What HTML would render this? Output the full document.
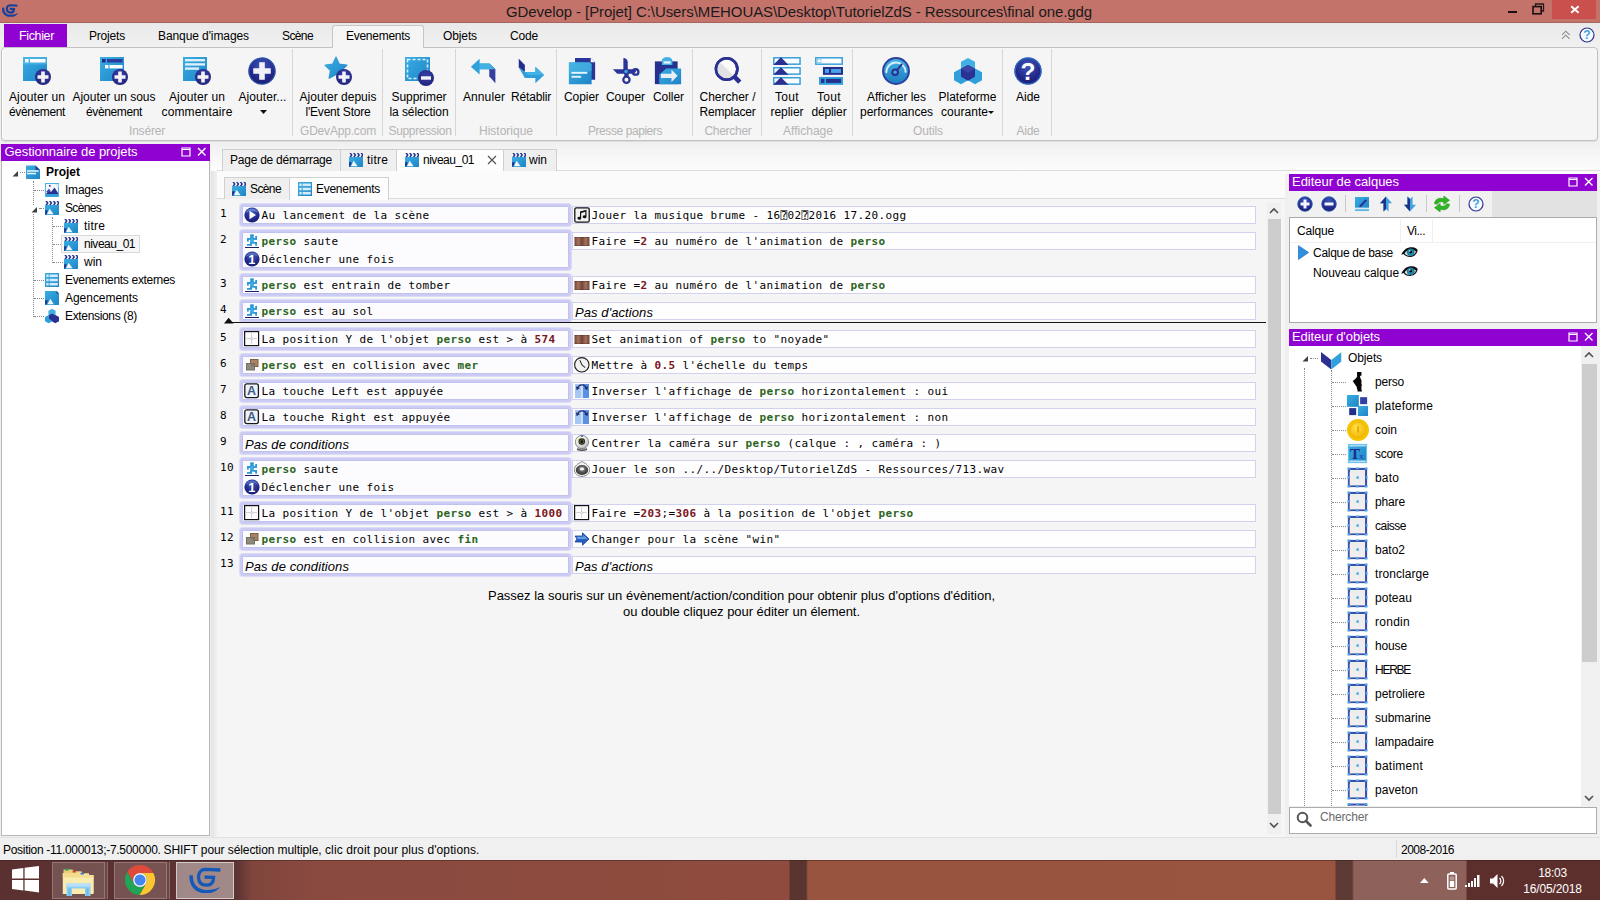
<!DOCTYPE html>
<html lang="fr">
<head>
<meta charset="utf-8">
<title>GDevelop - [Projet] final one.gdg</title>
<style>
html,body{margin:0;padding:0;}
body{width:1600px;height:900px;overflow:hidden;background:#f0f0f0;font-family:'Liberation Sans',sans-serif;font-size:12px;color:#000;}
#app{position:relative;width:1600px;height:900px;overflow:hidden;}
#app div,#app svg.i{position:absolute;box-sizing:border-box;}
.t{white-space:pre;}
.m{font-family:'DejaVu Sans Mono','Liberation Mono',monospace;font-size:11px;letter-spacing:0.378px;white-space:pre;height:16px;line-height:16px;}
.m b{color:#2C6420;font-weight:bold;}
.m i{color:#7A1420;font-weight:bold;font-style:normal;}
.cb{border:2px solid #CBCBF4;border-radius:3px;background:#FCFCFF;box-shadow:0 0 0 1px #DCDCF8,inset 0 0 0 1px #C2C2EE;}
.ab{border:1px solid #D2D2EE;background:#FEFEFF;}
.dv{border-left:1px dotted #8a8a8a;width:0;}
.dh{border-top:1px dotted #8a8a8a;height:0;}
</style>
</head>
<body>

<svg width="0" height="0" style="position:absolute">
<defs>
<linearGradient id="gb" x1="0" y1="0" x2="1" y2="1"><stop offset="0" stop-color="#3AAEE3"/><stop offset="1" stop-color="#1E84C6"/></linearGradient>
<linearGradient id="gb2" x1="0" y1="0" x2="0" y2="1"><stop offset="0" stop-color="#45B4E6"/><stop offset="1" stop-color="#1C7CC0"/></linearGradient>
<radialGradient id="gn" cx="0.5" cy="0.35" r="0.7"><stop offset="0" stop-color="#3A3FA8"/><stop offset="1" stop-color="#1F2278"/></radialGradient>
<radialGradient id="gnb" cx="0.5" cy="0.3" r="0.8"><stop offset="0" stop-color="#3D58B8"/><stop offset="0.6" stop-color="#23288A"/><stop offset="1" stop-color="#171A60"/></radialGradient>
<linearGradient id="gbrown" x1="0" y1="0" x2="1" y2="0"><stop offset="0" stop-color="#6E4638"/><stop offset="0.25" stop-color="#A8705C"/><stop offset="0.5" stop-color="#6E4638"/><stop offset="0.75" stop-color="#A8705C"/><stop offset="1" stop-color="#6E4638"/></linearGradient>
<radialGradient id="gcoin" cx="0.4" cy="0.35" r="0.7"><stop offset="0" stop-color="#FFE14A"/><stop offset="1" stop-color="#F0B400"/></radialGradient>

<radialGradient id="gball" cx="0.35" cy="0.3" r="0.8"><stop offset="0" stop-color="#FFFFFF"/><stop offset="0.6" stop-color="#DCDCDC"/><stop offset="1" stop-color="#A8A8A8"/></radialGradient><radialGradient id="gspk" cx="0.5" cy="0.4" r="0.6"><stop offset="0" stop-color="#B4B4B4"/><stop offset="0.5" stop-color="#5A5A5A"/><stop offset="1" stop-color="#2E2E2E"/></radialGradient>
<g id="plusbadge"><circle cx="22" cy="22" r="8" fill="url(#gn)"/><path d="M20.200 16.500h3.600v3.700h3.700v3.600h-3.700v3.700h-3.600v-3.700h-3.700v-3.600h3.700z" fill="#F4F4F8"/></g>
</defs>

<symbol id="r_event" viewBox="0 0 32 32"><rect x="2" y="2" width="24" height="24" fill="url(#gb)"/><rect x="2" y="2" width="24" height="7.5" fill="#55BDEA" opacity=".55"/><rect x="4" y="4" width="3.6" height="3.5" fill="#fff"/><rect x="9" y="4" width="15.5" height="3.5" fill="#fff"/><use href="#plusbadge"/></symbol>
<symbol id="r_subevent" viewBox="0 0 32 32"><rect x="2" y="2" width="24" height="24" fill="url(#gb)"/><rect x="4" y="4" width="3.6" height="3.5" fill="#24288A"/><rect x="9" y="4" width="15.5" height="3.5" fill="#2B3BA0"/><rect x="7" y="10" width="3.4" height="3.4" fill="#fff"/><rect x="11.5" y="10" width="13" height="3.4" fill="#fff"/><use href="#plusbadge"/></symbol>
<symbol id="r_comment" viewBox="0 0 32 32"><rect x="2" y="2" width="24" height="24" fill="url(#gb)"/><rect x="4" y="4" width="20" height="2.4" fill="#DDF0FA"/><rect x="4" y="8.2" width="20" height="2.4" fill="#DDF0FA"/><rect x="4" y="12.4" width="14" height="2.4" fill="#DDF0FA"/><use href="#plusbadge"/></symbol>
<symbol id="r_plus" viewBox="0 0 32 32"><circle cx="16" cy="16" r="15.500" fill="url(#gnb)"/><circle cx="16" cy="16" r="15" fill="none" stroke="#2C60B8" stroke-opacity=".7" stroke-width="1.400"/><path d="M12.800 6h6.400v6.800H26v6.400h-6.800V26h-6.400v-6.800H6v-6.400h6.800z" fill="#F2F2F6"/></symbol>
<symbol id="r_star" viewBox="0 0 32 32"><path d="M14 2.200l3.300 7 7.500 1-5.500 5.300 1.400 7.600-6.700-3.700-6.800 3.700 1.400-7.600L3.200 10.200l7.500-1z" fill="url(#gb)" stroke="url(#gb)" stroke-width="1.400" stroke-linejoin="round"/><use href="#plusbadge"/></symbol>
<symbol id="r_delsel" viewBox="0 0 32 32"><rect x="2" y="2" width="25" height="24" fill="url(#gb)"/><rect x="4.5" y="4.5" width="20" height="19" fill="none" stroke="#D8F0FA" stroke-width="1.6" stroke-dasharray="3 2"/><circle cx="23" cy="23" r="8" fill="url(#gn)"/><rect x="18" y="21.3" width="10" height="3.4" fill="#F4F4F8"/></symbol>
<symbol id="r_undo" viewBox="0 0 32 32"><path d="M1 11L11 2v5.5h11l7 6.5H11V20z" fill="#2FA2DC"/><path d="M22 7.5l7 6.5v16l-7-8z" fill="#3640A0"/><path d="M11 14h18l-7-6.5H11z" fill="#43B0E4"/></symbol>
<symbol id="r_redo" viewBox="0 0 32 32"><path d="M2 2l7 7v8L2 12z" fill="#242C8C"/><path d="M2 12l7 5h12v-6l10 9.5L21 30v-6H9z" fill="#2E9FDB"/><path d="M9 17h12v-6l10 9.5H13z" fill="#45B2E5"/></symbol>
<symbol id="r_copy" viewBox="0 0 32 32"><path d="M8 1h18l5 5v20H8z" fill="#2A3596"/><path d="M26 1l5 5h-5z" fill="#fff"/><path d="M1 6h24l2 2v23H1z" fill="url(#gb)"/><path d="M1 6h24l2 2v8L1 20z" fill="#4FB9E8" opacity=".5"/><rect x="4" y="17" width="18" height="2.2" fill="#E4F4FB"/><rect x="4" y="21.5" width="11" height="2.2" fill="#E4F4FB"/></symbol>
<symbol id="r_cut" viewBox="0 0 32 32"><path d="M13 1c3 0 5 2 5 5v11h-5z" fill="#2B3598"/><path d="M1 14h27c0 3-2 5-5 5H6z" fill="#2B3598"/><circle cx="16.5" cy="26" r="3.6" fill="none" stroke="#2B3598" stroke-width="2.6"/><circle cx="27" cy="17" r="3.2" fill="none" stroke="#2B3598" stroke-width="2.6"/><path d="M14 17h5v6h-5z" fill="#2B3598"/><circle cx="16" cy="16.5" r="2" fill="#3AA8E0"/></symbol>
<symbol id="r_paste" viewBox="0 0 32 32"><path d="M1 5h26v26H1z" fill="#27318F"/><path d="M9 4a6 4 0 0 1 12 0v5H9z" fill="#45B2E6"/><rect x="11" y="5" width="8" height="2.5" fill="#F0F8FC"/><path d="M14 13h17v18H6V20z" fill="url(#gb)"/><path d="M8 19h12v-4.5l7 7-7 7V24H8z" fill="#EAEFF4"/></symbol>
<symbol id="r_find" viewBox="0 0 32 32"><circle cx="14.500" cy="13.600" r="12.200" fill="#FAFAFA" stroke="#2B3192" stroke-width="3"/><path d="M5.600 21.500A12 12 0 0 1 6.500 5.500L22.500 21.500A12 12 0 0 1 5.600 21.500z" fill="#E2E2E4" transform="rotate(0)"/><circle cx="14.500" cy="13.600" r="12.200" fill="none" stroke="#2B3192" stroke-width="3"/><path d="M23.800 22.900l5.700 5.800" stroke="#2B3192" stroke-width="5.200"/></symbol>
<symbol id="r_fold" viewBox="0 0 32 32"><g id="foldrow"><rect x=".9" y=".9" width="30" height="7.300" fill="#FBFDFE" stroke="#37A0D8" stroke-width="1.700"/><path d="M.3 9L9 .3l8.800 8.700z" fill="#2B3192"/></g><use href="#foldrow" y="11.400"/><use href="#foldrow" y="22.800"/></symbol>
<symbol id="r_unfold" viewBox="0 0 32 32"><rect x=".9" y=".9" width="30.200" height="7.300" fill="#FBFDFE" stroke="#37A0D8" stroke-width="1.700"/><rect x="2.800" y="2.600" width="4" height="3.800" fill="#fff" stroke="#8CCFEF" stroke-width="1"/><rect x="9.100" y="11.400" width="22.900" height="9" fill="#25308C"/><rect x="11.400" y="13.700" width="4.600" height="4.500" fill="#4A9FE6"/><rect x="18.300" y="13.700" width="11.400" height="4.500" fill="#4A9FE6"/><rect x="4.600" y="22.800" width="27.400" height="9" fill="#319FDC"/><rect x="6.900" y="25" width="3.800" height="4.600" fill="#25308C"/><rect x="12.600" y="25" width="17.100" height="4.600" fill="#25308C"/></symbol>
<symbol id="r_perf" viewBox="0 0 32 32"><circle cx="16" cy="16" r="14.800" fill="url(#gb2)" stroke="#2A3EA0" stroke-width="2.200"/><path d="M5 17.500a11 11 0 0 1 22-0.500" fill="none" stroke="#D8EEF9" stroke-width="2.200" stroke-linecap="round"/><circle cx="15" cy="17.500" r="4.400" fill="#2B3192"/><path d="M15 17.500l7.500-9" stroke="#2B3192" stroke-width="2.200" stroke-linecap="round"/><circle cx="15" cy="17.500" r="2" fill="#3FA9E1"/></symbol>
<symbol id="r_platform" viewBox="0 0 32 32"><path d="M16 1l8 4.5v9L16 19l-8-4.500v-9z" fill="#43B0E4"/><path d="M8 14l8 4.5v9L8 32l-8-4.500v-9z" transform="translate(0 -1)" fill="#2E9FDB"/><path d="M24 14l8 4.5v9L24 32l-8-4.500v-9z" transform="translate(0 -1)" fill="#2E9FDB"/><path d="M16 9l8 4.5v9L16 27l-8-4.500v-9z" fill="#2B3192"/><path d="M16 9l8 4.500-8 4.500-8-4.500z" fill="#3A44A6"/></symbol>
<symbol id="r_help" viewBox="0 0 32 32"><circle cx="16" cy="16" r="15.500" fill="url(#gnb)"/><circle cx="16" cy="16" r="14.800" fill="none" stroke="#2A6FC8" stroke-opacity=".85" stroke-width="1.600"/><text x="16" y="26" text-anchor="middle" font-family="Liberation Sans,sans-serif" font-weight="bold" font-size="28" fill="#fff">?</text></symbol>

<!-- 16px icons -->
<symbol id="s_scene" viewBox="0 0 16 16"><rect x="1" y="1" width="14" height="4.500" fill="#F2F8FC"/><g fill="#25308C"><path d="M1.300 1h1.800l1.500 2.100L3.100 5.200H1.300l1.500-2.100z"/><path d="M5 1h1.800l1.500 2.100L6.800 5.200H5l1.500-2.100z"/><path d="M8.700 1h1.800L12 3.100l-1.500 2.100H8.700l1.500-2.100z"/><path d="M12.400 1h1.800l.8 1.100v2L14.200 5.200h-1.800l1.500-2.100z"/></g><rect x="1" y="5" width="14" height="10" fill="url(#gb)"/><path d="M3 14.300L5.600 8.800 9.600 14.300z" fill="#F2F7FA"/><path d="M1.200 14.600V10.300h2.400L2.300 14.600z" fill="#1F2C8A"/></symbol>
<symbol id="s_project" viewBox="0 0 16 16"><path d="M1 1.500h9.500L15 6v9H1z" fill="url(#gb)"/><path d="M10.500 1.500L15 6h-4.500z" fill="#2B3F9E"/><rect x="2" y="6.200" width="11.500" height="1.500" fill="#EAF7FD"/><rect x="2" y="8.800" width="9" height="1.500" fill="#EAF7FD"/></symbol>
<symbol id="s_images" viewBox="0 0 16 16"><rect x="1.500" y="1.500" width="13" height="13" fill="#F2F8FC" stroke="#4DB0E6"/><path d="M11 2h3.500v3.500z" fill="#CDE9F7"/><rect x="5" y="3" width="1.600" height="1.600" fill="#2B3192"/><path d="M2 12l3-4 2 2 3.500-4.500L14 11v2H2z" fill="#2B3192"/><path d="M2 10l3-3.200L6.500 8.500 5 10.500z" fill="#3C49A8"/><rect x="2" y="12" width="12" height="2.500" fill="#2E9FDB"/></symbol>
<symbol id="s_events" viewBox="0 0 16 16"><rect x="1" y="1" width="14" height="14" fill="url(#gb)"/><g fill="#D4ECF8"><rect x="2.300" y="2.500" width="2.400" height="2.600"/><rect x="5.600" y="2.500" width="8.200" height="2.600"/><rect x="2.300" y="6.700" width="2.400" height="2.600"/><rect x="5.600" y="6.700" width="8.200" height="2.600"/><rect x="2.300" y="10.900" width="2.400" height="2.600"/><rect x="5.600" y="10.900" width="8.200" height="2.600"/></g></symbol>
<symbol id="s_layout" viewBox="0 0 16 16"><path d="M1 1h11.500L15 3.500V15H1z" fill="url(#gb)"/><path d="M12.500 1L15 3.500h-2.500z" fill="#2B3192"/><path d="M3.600 14.300L6.300 8.800 9.800 14.300z" fill="#F2F7FA"/><path d="M1.200 14.600V10.300h2.600L2.400 14.600z" fill="#1F2C8A"/></symbol>
<symbol id="s_ext" viewBox="0 0 16 16"><path d="M8 .8l3.600 2v4.200L8 9 4.400 7V2.800z" fill="#43B0E4"/><path d="M4.600 7l3.600 2v4.200l-3.600 2-3.600-2V9z" fill="#2E9FDB"/><path d="M11.400 7l3.600 2v4.200l-3.600 2-3.600-2V9z" fill="#2B3192"/><path d="M8 5.500l3 1.700v3.500l-3 1.700-3-1.700V7.200z" fill="#2B3192"/></symbol>

<symbol id="c_play" viewBox="0 0 16 16"><circle cx="8" cy="8" r="7.600" fill="url(#gnb)"/><path d="M1.500 6a7 7 0 0 1 13 0a12 12 0 0 0-13 0z" fill="#6F96D8" opacity=".7"/><path d="M5.500 3.800l6.500 4.200-6.500 4.200z" fill="#fff"/></symbol>
<symbol id="c_one" viewBox="0 0 16 16"><circle cx="8" cy="8" r="7.600" fill="url(#gnb)"/><path d="M1.500 6a7 7 0 0 1 13 0a12 12 0 0 0-13 0z" fill="#6F96D8" opacity=".5"/><clipPath id="cp1"><rect x="0" y="0" width="11.400" height="16"/></clipPath><text x="4.300" y="12.600" clip-path="url(#cp1)" font-family="Liberation Sans,sans-serif" font-weight="bold" font-size="13" fill="#fff">1 H</text></symbol>
<symbol id="c_jump" viewBox="0 0 16 16"><g fill="#2C98D6"><rect x="6.100" y="1.200" width="3.700" height="2.900" rx=".8"/><rect x="11.200" y="3" width="1.800" height="3.500"/><rect x="3" y="5" width="10" height="1.900"/><rect x="3" y="5" width="1.800" height="3.600"/><rect x="6.200" y="3.800" width="3.600" height="6.800"/><rect x="9.500" y="9" width="3.500" height="1.800"/><rect x="11.200" y="9" width="1.800" height="3.700"/><rect x="3" y="11" width="4.800" height="1.700"/><rect x="6.200" y="10" width="1.800" height="2.700"/></g><rect x="6.800" y="5.200" width="2.400" height="4" fill="#45B4EE" opacity=".8"/><rect x="1" y="14" width="14" height="1" fill="#1E1E62"/></symbol>
<symbol id="c_pos" viewBox="0 0 16 16"><rect x=".6" y=".6" width="14" height="14" fill="#FDFDFD" stroke="#141414" stroke-width="1.200"/><path d="M7.600 2.500v10.500M2.500 7.600h10.500" stroke="#A8A8A8" stroke-width="1" stroke-dasharray="1 1"/><path d="M7.600 6.300l1.300 1.300-1.300 1.300-1.300-1.300z" fill="#fff" stroke="#999" stroke-width=".6"/></symbol>
<symbol id="c_coll" viewBox="0 0 16 16"><rect x="6.500" y="2.500" width="7.500" height="7" fill="#A88462" stroke="#7E5E42"/><rect x="2.500" y="6.500" width="8" height="6.500" fill="#8E8C7C" stroke="#727064"/><rect x="7" y="7" width="3" height="2.500" fill="#8A765E"/></symbol>
<symbol id="c_key" viewBox="0 0 16 16"><rect x=".8" y=".8" width="13.600" height="13.800" rx="2" fill="#EEF3F8" stroke="#1A1A1A" stroke-width="1.300"/><text x="7.600" y="12.400" text-anchor="middle" font-family="Liberation Sans,sans-serif" font-weight="bold" font-size="12.500" fill="#3C5A86">A</text></symbol>

<symbol id="a_music" viewBox="0 0 16 16"><rect x=".8" y=".8" width="14.400" height="14.400" rx="1.500" fill="#F2F2F2" stroke="#111" stroke-width="1.300"/><path d="M6 4.500l6.500-1.700v1.800L7.200 6v5.200a1.900 1.500 0 1 1-1.200-1.400zM12.500 4.600v5.200a1.900 1.500 0 1 1-1.200-1.400V4.900z" fill="#111"/></symbol>
<symbol id="a_anim" viewBox="0 0 16 16"><rect x=".5" y="4" width="15" height="9" fill="url(#gbrown)"/><rect x=".5" y="4" width="15" height="1" fill="#4A2E26" opacity=".35"/><rect x=".5" y="12" width="15" height="1" fill="#4A2E26" opacity=".35"/></symbol>
<symbol id="a_clock" viewBox="0 0 16 16"><circle cx="7.800" cy="7.800" r="7.200" fill="#F2F2F2" stroke="#1A1A1A" stroke-width="1.100"/><path d="M5.800 3.200L8 8l3.200 2.600" fill="none" stroke="#333" stroke-width="1.100"/></symbol>
<symbol id="a_flip" viewBox="0 0 16 16"><rect x="1" y="1" width="7" height="14" fill="#A6C6F3"/><rect x="8" y="1" width="7" height="14" fill="#5B90E3"/><rect x="7.500" y="1" width="1.200" height="14" fill="#F4F8FF"/><path d="M3.500 5.500C4.500 2.500 7 1.800 8 1.800s3.500.7 4.500 3.700" fill="none" stroke="#1B2A6A" stroke-width="1.300"/><path d="M2 3.200l.6 4 3.200-2.200z" fill="#1B2A6A"/><path d="M14 3.200l-.6 4-3.200-2.200z" fill="#1B2A6A"/></symbol>
<symbol id="a_cam" viewBox="0 0 16 16"><ellipse cx="8" cy="14.200" rx="5.200" ry="1.700" fill="#4A4A4A"/><ellipse cx="8" cy="13.600" rx="4.600" ry="1.100" fill="#B0B0B0"/><circle cx="8" cy="7" r="6.700" fill="url(#gball)" stroke="#6E6E6E" stroke-width=".7"/><path d="M3 5.500A5.500 5.500 0 0 1 7 2L7 5z" fill="#D8E060" opacity=".7"/><circle cx="8" cy=".9" r="1.100" fill="#4468CC"/><circle cx="7.800" cy="6.600" r="3.300" fill="#2B2B2B"/><circle cx="7.800" cy="6.600" r="2.100" fill="#77773C"/><circle cx="7.800" cy="6.600" r="1.300" fill="#0C0C0C"/></symbol>
<symbol id="a_sound" viewBox="0 0 16 16"><path d="M8 .6C12 2.500 15.700 5 15.700 8.700c0 3.900-3.400 6.700-7.700 6.700S.3 12.600.3 8.700C.3 5 4 2.500 8 .6z" fill="#F2F2F2" stroke="#5A5A5A" stroke-width=".7"/><ellipse cx="8" cy="9" rx="6.200" ry="5" fill="url(#gspk)"/><ellipse cx="8" cy="8" rx="2.100" ry="1.400" fill="#F6F6F6" opacity=".95"/></symbol>
<symbol id="a_arrow" viewBox="0 0 16 16"><path d="M1 5h7.500V1.800l6.500 6.200-6.500 6.200V11H1l2-3z" fill="#2560C4" stroke="#143C94" stroke-width=".8"/><path d="M2.500 5.800h6.800V3.800L13.500 8H3.500z" fill="#7BB4EE" opacity=".75"/></symbol>

<!-- layer toolbar -->
<symbol id="l_plus" viewBox="0 0 16 16"><circle cx="8" cy="8" r="7.500" fill="url(#gnb)"/><circle cx="8" cy="8" r="7.200" fill="none" stroke="#2C70C8" stroke-opacity=".7" stroke-width="1"/><path d="M6.500 3.500h3v3h3v3h-3v3h-3v-3h-3v-3h3z" fill="#F4F4F8"/></symbol>
<symbol id="l_minus" viewBox="0 0 16 16"><circle cx="8" cy="8" r="7.500" fill="url(#gnb)"/><circle cx="8" cy="8" r="7.200" fill="none" stroke="#2C70C8" stroke-opacity=".7" stroke-width="1"/><rect x="3.500" y="6.500" width="9" height="3" fill="#F4F4F8"/></symbol>
<symbol id="l_edit" viewBox="0 0 16 16"><rect x="1" y="1" width="14" height="10.800" fill="url(#gb)"/><path d="M5.500 9.500l6-6.300 1.500 1.500-6 6.300H5.500z" fill="#2B3192"/><rect x="1" y="11.800" width="14" height="1.400" fill="#D4ECF8"/><rect x="1" y="13.400" width="14" height="1.400" fill="#37A6DF"/></symbol>
<symbol id="l_up" viewBox="0 0 16 16"><path d="M8 .5l6 6.800h-3.500v8.200L8 13l-2.500 2.500V7.300H2z" fill="#3FA2E0"/><path d="M8 .5L2 7.300h3.500v8.200L8 13z" fill="#1F3488"/></symbol>
<symbol id="l_down" viewBox="0 0 16 16"><path d="M8 15.500l6-6.800h-3.500V.5L8 3 5.500 .5v8.200H2z" fill="#3FA2E0"/><path d="M8 15.500L2 8.700h3.500V.5L8 3z" fill="#1F3488"/></symbol>
<symbol id="l_refresh" viewBox="0 0 16 16"><path d="M.5 7.800C.8 4 4 1.800 7.500 2.300l2.300.5V0l5.700 4.300-5.700 4.300V6.200L7.500 5.800C5.500 5.600 4 6.500 3.500 8.300z" fill="#2DB522" stroke="#1F8A18" stroke-width=".5"/><path d="M15.500 8.200c-.3 3.800-3.500 6-7 5.500l-2.300-.5V16L.5 11.700l5.700-4.300v2.400l2.300.4c2 .2 3.500-.7 4-2.500z" fill="#2DB522" stroke="#1F8A18" stroke-width=".5"/></symbol>
<symbol id="l_help" viewBox="0 0 16 16"><circle cx="8" cy="8" r="7" fill="#F6FAFE" stroke="#2B3192" stroke-width="1.200"/><text x="8" y="12.300" text-anchor="middle" font-family="Liberation Sans,sans-serif" font-weight="bold" font-size="12" fill="#3FA2DE">?</text></symbol>
<symbol id="l_eye" viewBox="0 0 18 12"><path d="M.3 9C2.500 3 7.500 .6 12 1c2.800.3 4.800 1.600 5.700 3-.6 3.800-3.200 7-7.700 7.200C6.500 11.300 3.800 10 2.800 8z" fill="#0E0E0E"/><path d="M3.800 7.200c1.800-2.600 4.600-3.800 7.800-3.500 2 .2 3.400 1 4.300 1.800-1 2.600-2.900 4.400-5.900 4.600-2.600.2-5-.9-6.200-2.900z" fill="#D8E4E8"/><circle cx="10.300" cy="6.200" r="3.700" fill="#1F8FB2"/><circle cx="10.300" cy="6.200" r="3.700" fill="none" stroke="#0F5F7C" stroke-width=".8"/><circle cx="10.300" cy="6" r="1.500" fill="#050505"/><circle cx="9.300" cy="4.900" r=".8" fill="#fff"/></symbol>
<symbol id="l_cur" viewBox="0 0 12 16"><path d="M.5.500l11 7.500-11 7.500z" fill="#2E8FE0" stroke="#1E6FC8" stroke-width=".8"/></symbol>

<!-- object icons 24 -->
<symbol id="o_root" viewBox="0 0 20.500 17.600"><path d="M0 0l10.300 8v9.600L0 9.600z" fill="#2B3192"/><path d="M20.500 0L10.300 8v9.600l10.200-8z" fill="#2FA2DC"/></symbol>
<symbol id="o_perso" viewBox="0 0 24 24"><path d="M11.500 1h5v4.500h-1.500v2l1.500 3v5l1 .5-1 1v5h.5v1.500h-5V22l-1-4-2-3-2.500-3.500L9.500 9l2-2.500z" fill="#050505"/></symbol>
<symbol id="o_plat" viewBox="0 0 24 24"><rect x="0" y="0" width="13.500" height="13.500" fill="url(#gb)"/><rect x="15" y="2.500" width="8" height="8" fill="#3340A0"/><rect x="2.500" y="15" width="8" height="8" fill="#24308E"/><rect x="12.500" y="12.500" width="11.500" height="11.500" fill="url(#gb)"/></symbol>
<symbol id="o_coin" viewBox="0 0 24 24"><circle cx="12" cy="12" r="12" fill="#F5C200"/><circle cx="12" cy="12" r="8.500" fill="url(#gcoin)" stroke="#EDB600" stroke-width=".8"/><rect x="11" y="7.500" width="2.200" height="7.500" rx="1" fill="#EBAA00"/></symbol>
<symbol id="o_text" viewBox="0 0 24 24"><rect x="1.600" y="1.600" width="20.800" height="20.800" fill="url(#gb)" stroke="#6CC2EC" stroke-width="1.200"/><rect x="2.500" y="2.500" width="19" height="1.400" fill="#C8E8F8"/><rect x="2.500" y="20" width="19" height="1.600" fill="#C8E8F8"/><text x="3.500" y="18" font-family="Liberation Serif,serif" font-weight="bold" font-size="17" fill="#1E2A8A">T</text><text x="14" y="18.500" font-family="Liberation Serif,serif" font-weight="bold" font-size="10" fill="#2B4FB8">x</text></symbol>
<symbol id="o_sprite" viewBox="0 0 24 24"><rect x="2.200" y="2.200" width="19.600" height="19.600" fill="#EDEDED" stroke="#3A4EAE" stroke-width="2.400"/><path d="M3 21L21 21 3 5z" fill="#F4EEEE" opacity=".8"/><g fill="#49A8E4"><rect x=".6" y=".6" width="3.200" height="2.400"/><rect x="20.200" y=".6" width="3.200" height="2.400"/><rect x=".6" y="21" width="3.200" height="2.400"/><rect x="20.200" y="21" width="3.200" height="2.400"/><rect x="10.500" y=".6" width="3" height="2"/><rect x="10.500" y="21.400" width="3" height="2"/><rect x=".6" y="10.500" width="2" height="3"/><rect x="21.400" y="10.500" width="2" height="3"/></g><rect x="10.800" y="10.800" width="2.600" height="2.600" fill="#3FA2DE"/></symbol>

<symbol id="x_search" viewBox="0 0 16 16"><circle cx="6.500" cy="6.500" r="4.800" fill="none" stroke="#555" stroke-width="2"/><path d="M10 10l4.500 4.500" stroke="#555" stroke-width="2.600" stroke-linecap="round"/></symbol>
<symbol id="x_gd" viewBox="18.500 8.500 33 26.500" preserveAspectRatio="none"><path d="M50.300 11.500L35 10.900C29.500 11.200 28 15.500 28.200 19.500 28.500 24.500 32 26.700 37 26.600c4.500-.1 6.200-2.800 6.500-7.800L34.300 18.600" fill="none" stroke="#1458B8" stroke-width="3.300"/><path d="M19 16.700C18.300 25 22.500 32.800 32.500 34.700 39.500 36 46 33.500 50.300 28.600 45 31 39 32 33.500 31.200 25.500 29.800 22 23.500 22.400 16.700z" fill="#1458B8"/></symbol>
<symbol id="x_gd2" viewBox="18.500 8.500 33 26.500" preserveAspectRatio="none"><path d="M50.300 11.700L35 11.100C29.500 11.400 28.300 15.500 28.500 19.500 28.800 24.300 32 26.400 37 26.300c4.300-.1 5.900-2.600 6.200-7.300L34.300 18.800" fill="none" stroke="#1A409E" stroke-width="4.600"/><path d="M19 16.700C18.300 25 22.500 32.800 32.500 34.700 39.500 36 46 33.500 50.300 28.600 45 31 39 32 33.500 31.200 25.500 29.800 22 23.500 22.400 16.700z" fill="#1A409E" stroke="#1A409E" stroke-width="1.600"/></symbol>
</svg>

<div id="app">
<div class="" style="position:absolute;left:0px;top:0px;width:1600px;height:23px;background:#C4736B;"></div>
<div class="" style="position:absolute;left:0px;top:22px;width:1600px;height:1px;background:#A8645E;"></div>
<svg class="i" style="left:2px;top:4.4px" width="16" height="12.8"><use href="#x_gd2"/></svg>
<div class="t " style="left:799px;top:2px;height:20px;line-height:20px;font-size:15px;width:1200px;margin-left:-600px;text-align:center;color:#1a1a1a;letter-spacing:-0.084px;">GDevelop - [Projet] C:\Users\MEHOUAS\Desktop\TutorielZdS - Ressources\final one.gdg</div>
<div class="" style="position:absolute;left:1508px;top:11px;width:9px;height:2px;background:#1a1010;"></div>
<svg class="i" style="left:1532px;top:3px" width="13" height="12"><path d="M3.500 3.500V1h8v7H9.500" fill="none" stroke="#2a1a1a" stroke-width="1.300"/><rect x="1" y="3.600" width="8.200" height="7.200" fill="none" stroke="#1a1010" stroke-width="1.600"/></svg>
<div class="" style="position:absolute;left:1552px;top:0px;width:44px;height:19px;background:#C9504D;"></div>
<svg class="i" style="left:1570px;top:5px" width="10" height="9"><path d="M1.200 1.200l7.400 6.600M8.600 1.200L1.200 7.800" stroke="#fff" stroke-width="1.900"/></svg>
<div class="" style="position:absolute;left:0px;top:23px;width:1600px;height:120px;background:linear-gradient(#E9E9E9,#F1F1F1 24px,#F1F1F1);"></div>
<div class="" style="position:absolute;left:4px;top:24px;width:63px;height:23px;background:#9002D1;"></div>
<div class="t " style="left:19px;top:27.75px;height:16.5px;line-height:16.5px;font-size:12.5px;color:#fff;letter-spacing:-0.358px;">Fichier</div>
<div class="t " style="left:89px;top:28px;height:16px;line-height:16px;font-size:12px;letter-spacing:-0.193px;">Projets</div>
<div class="t " style="left:158px;top:28px;height:16px;line-height:16px;font-size:12px;letter-spacing:-0.09px;">Banque d'images</div>
<div class="t " style="left:282px;top:28px;height:16px;line-height:16px;font-size:12px;letter-spacing:-0.605px;">Scène</div>
<div class="t " style="left:443px;top:28px;height:16px;line-height:16px;font-size:12px;letter-spacing:-0.114px;">Objets</div>
<div class="t " style="left:510px;top:28px;height:16px;line-height:16px;font-size:12px;letter-spacing:-0.172px;">Code</div>
<div class="" style="position:absolute;left:1px;top:47px;width:1597px;height:94px;background:#F5F5F5;border:1px solid #C2C2C2;border-radius:4px;box-shadow:0 1px 1px #dcdcdc,inset 1px 0 0 #fff;"></div>
<div class="" style="position:absolute;left:332px;top:25px;width:92px;height:23px;background:#F5F5F5;border:1px solid #C6C6C6;border-bottom:none;border-radius:3px 3px 0 0;"></div>
<div class="t " style="left:346px;top:28px;height:16px;line-height:16px;font-size:12px;letter-spacing:-0.27px;">Evenements</div>
<svg class="i" style="left:1561px;top:30px" width="10" height="10"><path d="M1 4.800L4.800 1.200l3.800 3.600M1 8.800L4.800 5.200l3.800 3.600" fill="none" stroke="#8a8a8a" stroke-width="1.100"/></svg>
<svg class="i" style="left:1579px;top:27px" width="16" height="16"><use href="#l_help"/></svg>
<svg class="i" style="left:21px;top:55px" width="32" height="32"><use href="#r_event"/></svg>
<div class="t " style="left:37px;top:89px;height:16px;line-height:16px;font-size:12px;width:1200px;margin-left:-600px;text-align:center;letter-spacing:0.13px;">Ajouter un</div>
<div class="t " style="left:37px;top:104px;height:16px;line-height:16px;font-size:12px;width:1200px;margin-left:-600px;text-align:center;letter-spacing:-0.375px;">évènement</div>
<svg class="i" style="left:98px;top:55px" width="32" height="32"><use href="#r_subevent"/></svg>
<div class="t " style="left:114px;top:89px;height:16px;line-height:16px;font-size:12px;width:1200px;margin-left:-600px;text-align:center;letter-spacing:-0.026px;">Ajouter un sous</div>
<div class="t " style="left:114px;top:104px;height:16px;line-height:16px;font-size:12px;width:1200px;margin-left:-600px;text-align:center;letter-spacing:-0.375px;">évènement</div>
<svg class="i" style="left:181px;top:55px" width="32" height="32"><use href="#r_comment"/></svg>
<div class="t " style="left:197px;top:89px;height:16px;line-height:16px;font-size:12px;width:1200px;margin-left:-600px;text-align:center;letter-spacing:0.13px;">Ajouter un</div>
<div class="t " style="left:197px;top:104px;height:16px;line-height:16px;font-size:12px;width:1200px;margin-left:-600px;text-align:center;letter-spacing:0.149px;">commentaire</div>
<svg class="i" style="left:248px;top:57px" width="28" height="28"><use href="#r_plus"/></svg>
<div class="t " style="left:262.5px;top:89px;height:16px;line-height:16px;font-size:12px;width:1200px;margin-left:-600px;text-align:center;letter-spacing:0.064px;">Ajouter...</div>
<svg class="i" style="left:322px;top:55px" width="32" height="32"><use href="#r_star"/></svg>
<div class="t " style="left:338px;top:89px;height:16px;line-height:16px;font-size:12px;width:1200px;margin-left:-600px;text-align:center;letter-spacing:0.02px;">Ajouter depuis</div>
<div class="t " style="left:338px;top:104px;height:16px;line-height:16px;font-size:12px;width:1200px;margin-left:-600px;text-align:center;letter-spacing:-0.204px;">l'Event Store</div>
<svg class="i" style="left:403px;top:55px" width="32" height="32"><use href="#r_delsel"/></svg>
<div class="t " style="left:419px;top:89px;height:16px;line-height:16px;font-size:12px;width:1200px;margin-left:-600px;text-align:center;letter-spacing:-0.039px;">Supprimer</div>
<div class="t " style="left:419px;top:104px;height:16px;line-height:16px;font-size:12px;width:1200px;margin-left:-600px;text-align:center;letter-spacing:-0.086px;">la sélection</div>
<svg class="i" style="left:470px;top:57px" width="28" height="28"><use href="#r_undo"/></svg>
<div class="t " style="left:484px;top:89px;height:16px;line-height:16px;font-size:12px;width:1200px;margin-left:-600px;text-align:center;letter-spacing:0.091px;">Annuler</div>
<svg class="i" style="left:517px;top:57px" width="28" height="28"><use href="#r_redo"/></svg>
<div class="t " style="left:531px;top:89px;height:16px;line-height:16px;font-size:12px;width:1200px;margin-left:-600px;text-align:center;letter-spacing:-0.169px;">Rétablir</div>
<svg class="i" style="left:568px;top:57px" width="28" height="28"><use href="#r_copy"/></svg>
<div class="t " style="left:581.5px;top:89px;height:16px;line-height:16px;font-size:12px;width:1200px;margin-left:-600px;text-align:center;letter-spacing:-0.058px;">Copier</div>
<svg class="i" style="left:612px;top:57px" width="28" height="28"><use href="#r_cut"/></svg>
<div class="t " style="left:625.5px;top:89px;height:16px;line-height:16px;font-size:12px;width:1200px;margin-left:-600px;text-align:center;letter-spacing:-0.06px;">Couper</div>
<svg class="i" style="left:654px;top:57px" width="28" height="28"><use href="#r_paste"/></svg>
<div class="t " style="left:668.5px;top:89px;height:16px;line-height:16px;font-size:12px;width:1200px;margin-left:-600px;text-align:center;letter-spacing:-0.057px;">Coller</div>
<svg class="i" style="left:714px;top:57px" width="28" height="28"><use href="#r_find"/></svg>
<div class="t " style="left:727.5px;top:89px;height:16px;line-height:16px;font-size:12px;width:1200px;margin-left:-600px;text-align:center;letter-spacing:-0.002px;">Chercher /</div>
<div class="t " style="left:727.5px;top:104px;height:16px;line-height:16px;font-size:12px;width:1200px;margin-left:-600px;text-align:center;letter-spacing:-0.224px;">Remplacer</div>
<svg class="i" style="left:773px;top:57px" width="28" height="28"><use href="#r_fold"/></svg>
<div class="t " style="left:787px;top:89px;height:16px;line-height:16px;font-size:12px;width:1200px;margin-left:-600px;text-align:center;letter-spacing:0.33px;">Tout</div>
<div class="t " style="left:787px;top:104px;height:16px;line-height:16px;font-size:12px;width:1200px;margin-left:-600px;text-align:center;letter-spacing:-0.049px;">replier</div>
<svg class="i" style="left:815px;top:57px" width="28" height="28"><use href="#r_unfold"/></svg>
<div class="t " style="left:829px;top:89px;height:16px;line-height:16px;font-size:12px;width:1200px;margin-left:-600px;text-align:center;letter-spacing:0.33px;">Tout</div>
<div class="t " style="left:829px;top:104px;height:16px;line-height:16px;font-size:12px;width:1200px;margin-left:-600px;text-align:center;letter-spacing:-0.146px;">déplier</div>
<svg class="i" style="left:882px;top:57px" width="28" height="28"><use href="#r_perf"/></svg>
<div class="t " style="left:896.5px;top:89px;height:16px;line-height:16px;font-size:12px;width:1200px;margin-left:-600px;text-align:center;letter-spacing:-0.012px;">Afficher les</div>
<div class="t " style="left:896.5px;top:104px;height:16px;line-height:16px;font-size:12px;width:1200px;margin-left:-600px;text-align:center;letter-spacing:-0.03px;">performances</div>
<svg class="i" style="left:954px;top:57px" width="28" height="28"><use href="#r_platform"/></svg>
<div class="t " style="left:967.5px;top:89px;height:16px;line-height:16px;font-size:12px;width:1200px;margin-left:-600px;text-align:center;letter-spacing:-0.003px;">Plateforme</div>
<div class="t " style="left:964.5px;top:104px;height:16px;line-height:16px;font-size:12px;width:1200px;margin-left:-600px;text-align:center;letter-spacing:0.038px;">courante</div>
<svg class="i" style="left:1014px;top:57px" width="28" height="28"><use href="#r_help"/></svg>
<div class="t " style="left:1028px;top:89px;height:16px;line-height:16px;font-size:12px;width:1200px;margin-left:-600px;text-align:center;letter-spacing:-0.004px;">Aide</div>
<svg class="i" style="left:260px;top:110px" width="7" height="4"><path d="M0 0h7L3.500 4z" fill="#111"/></svg>
<svg class="i" style="left:988px;top:111px" width="6" height="3"><path d="M0 0h6L3 3z" fill="#111"/></svg>
<div class="t " style="left:147px;top:123px;height:16px;line-height:16px;font-size:12px;width:1200px;margin-left:-600px;text-align:center;color:#B4B4B4;letter-spacing:-0.193px;">Insérer</div>
<div class="t " style="left:338px;top:123px;height:16px;line-height:16px;font-size:12px;width:1200px;margin-left:-600px;text-align:center;color:#B4B4B4;letter-spacing:-0.184px;">GDevApp.com</div>
<div class="t " style="left:420px;top:123px;height:16px;line-height:16px;font-size:12px;width:1200px;margin-left:-600px;text-align:center;color:#B4B4B4;letter-spacing:-0.337px;">Suppression</div>
<div class="t " style="left:506px;top:123px;height:16px;line-height:16px;font-size:12px;width:1200px;margin-left:-600px;text-align:center;color:#B4B4B4;letter-spacing:-0.002px;">Historique</div>
<div class="t " style="left:625px;top:123px;height:16px;line-height:16px;font-size:12px;width:1200px;margin-left:-600px;text-align:center;color:#B4B4B4;letter-spacing:-0.431px;">Presse papiers</div>
<div class="t " style="left:728px;top:123px;height:16px;line-height:16px;font-size:12px;width:1200px;margin-left:-600px;text-align:center;color:#B4B4B4;letter-spacing:-0.294px;">Chercher</div>
<div class="t " style="left:808px;top:123px;height:16px;line-height:16px;font-size:12px;width:1200px;margin-left:-600px;text-align:center;color:#B4B4B4;letter-spacing:0.02px;">Affichage</div>
<div class="t " style="left:928px;top:123px;height:16px;line-height:16px;font-size:12px;width:1200px;margin-left:-600px;text-align:center;color:#B4B4B4;letter-spacing:-0.112px;">Outils</div>
<div class="t " style="left:1028px;top:123px;height:16px;line-height:16px;font-size:12px;width:1200px;margin-left:-600px;text-align:center;color:#B4B4B4;letter-spacing:-0.254px;">Aide</div>
<div class="" style="position:absolute;left:292px;top:49px;width:1px;height:87px;background:#D6D6D6;"></div>
<div class="" style="position:absolute;left:382px;top:49px;width:1px;height:87px;background:#D6D6D6;"></div>
<div class="" style="position:absolute;left:455px;top:49px;width:1px;height:87px;background:#D6D6D6;"></div>
<div class="" style="position:absolute;left:556px;top:49px;width:1px;height:87px;background:#D6D6D6;"></div>
<div class="" style="position:absolute;left:692px;top:49px;width:1px;height:87px;background:#D6D6D6;"></div>
<div class="" style="position:absolute;left:761px;top:49px;width:1px;height:87px;background:#D6D6D6;"></div>
<div class="" style="position:absolute;left:852px;top:49px;width:1px;height:87px;background:#D6D6D6;"></div>
<div class="" style="position:absolute;left:1002px;top:49px;width:1px;height:87px;background:#D6D6D6;"></div>
<div class="" style="position:absolute;left:1051px;top:49px;width:1px;height:87px;background:#D6D6D6;"></div>
<div class="" style="position:absolute;left:1px;top:144px;width:209px;height:692px;background:#fff;border:1px solid #B8B8B8;"></div>
<div class="" style="position:absolute;left:1px;top:144px;width:209px;height:17px;background:#9002D1;"></div>
<div class="t " style="left:4.5px;top:144px;height:16px;line-height:16px;font-size:13px;color:#fff;letter-spacing:-0.061px;">Gestionnaire de projets</div>
<svg class="i" style="left:181px;top:147px" width="26" height="10"><path d="M1 1h8v8H1zM1 2.500h8" fill="none" stroke="#fff" stroke-width="1.200"/><path d="M17 1l7.500 7.500M24.500 1L17 8.500" stroke="#fff" stroke-width="1.400"/></svg>
<div class="dv" style="position:absolute;left:33px;top:181px;width:0px;height:136px;"></div>
<div class="dh" style="position:absolute;left:34px;top:190px;width:10px;height:0px;"></div>
<div class="dh" style="position:absolute;left:34px;top:208px;width:10px;height:0px;"></div>
<div class="dh" style="position:absolute;left:34px;top:280px;width:10px;height:0px;"></div>
<div class="dh" style="position:absolute;left:34px;top:298px;width:10px;height:0px;"></div>
<div class="dh" style="position:absolute;left:34px;top:316px;width:10px;height:0px;"></div>
<div class="dh" style="position:absolute;left:20px;top:172px;width:5px;height:0px;"></div>
<div class="dv" style="position:absolute;left:52px;top:217px;width:0px;height:46px;"></div>
<div class="dh" style="position:absolute;left:53px;top:226px;width:10px;height:0px;"></div>
<div class="dh" style="position:absolute;left:53px;top:244px;width:10px;height:0px;"></div>
<div class="dh" style="position:absolute;left:53px;top:262px;width:10px;height:0px;"></div>
<div class="dh" style="position:absolute;left:40px;top:208px;width:4px;height:0px;"></div>
<svg class="i" style="left:12px;top:169.5px;background:#fff" width="7" height="8"><path d="M6 1v5.500H.5z" fill="#404040"/></svg>
<svg class="i" style="left:31px;top:205.5px;background:#fff" width="7" height="8"><path d="M6 1v5.500H.5z" fill="#404040"/></svg>
<svg class="i" style="left:25px;top:164px" width="16" height="16"><use href="#s_project"/></svg>
<div class="t " style="left:46px;top:164px;height:16px;line-height:16px;font-size:12px;font-weight:bold;letter-spacing:-0.001px;">Projet</div>
<svg class="i" style="left:44px;top:182px" width="16" height="16"><use href="#s_images"/></svg>
<div class="t " style="left:65px;top:182px;height:16px;line-height:16px;font-size:12px;letter-spacing:-0.225px;">Images</div>
<svg class="i" style="left:44px;top:200px" width="16" height="16"><use href="#s_scene"/></svg>
<div class="t " style="left:65px;top:200px;height:16px;line-height:16px;font-size:12px;letter-spacing:-0.671px;">Scènes</div>
<svg class="i" style="left:63px;top:218px" width="16" height="16"><use href="#s_scene"/></svg>
<div class="t " style="left:84px;top:218px;height:16px;line-height:16px;font-size:12px;letter-spacing:0.199px;">titre</div>
<div class="" style="position:absolute;left:61px;top:235px;width:79px;height:18px;background:#F7F7F7;border:1px solid #DADADA;"></div>
<svg class="i" style="left:63px;top:236px" width="16" height="16"><use href="#s_scene"/></svg>
<div class="t " style="left:84px;top:236px;height:16px;line-height:16px;font-size:12px;letter-spacing:-0.487px;">niveau_01</div>
<svg class="i" style="left:63px;top:254px" width="16" height="16"><use href="#s_scene"/></svg>
<div class="t " style="left:84px;top:254px;height:16px;line-height:16px;font-size:12px;letter-spacing:-0.002px;">win</div>
<svg class="i" style="left:44px;top:272px" width="16" height="16"><use href="#s_events"/></svg>
<div class="t " style="left:65px;top:272px;height:16px;line-height:16px;font-size:12px;letter-spacing:-0.319px;">Evenements externes</div>
<svg class="i" style="left:44px;top:290px" width="16" height="16"><use href="#s_layout"/></svg>
<div class="t " style="left:65px;top:290px;height:16px;line-height:16px;font-size:12px;letter-spacing:-0.034px;">Agencements</div>
<svg class="i" style="left:44px;top:308px" width="16" height="16"><use href="#s_ext"/></svg>
<div class="t " style="left:65px;top:308px;height:16px;line-height:16px;font-size:12px;letter-spacing:-0.336px;">Extensions (8)</div>
<div class="" style="position:absolute;left:211px;top:143px;width:6px;height:694px;background:linear-gradient(90deg,#E4E4E4,#F0F0F0);"></div>
<div class="" style="position:absolute;left:217px;top:143px;width:1068px;height:694px;background:#F5F5F5;"></div>
<div class="" style="position:absolute;left:211px;top:143px;width:1389px;height:28px;background:linear-gradient(#F0F0F0,#FDFDFD);"></div>
<div class="" style="position:absolute;left:217px;top:170px;width:1383px;height:1px;background:#DDDDDD;"></div>
<div class="" style="position:absolute;left:217px;top:171px;width:1383px;height:3px;background:#FBFBFB;"></div>
<div class="" style="position:absolute;left:217px;top:174px;width:1068px;height:25px;background:#FBFBFB;"></div>
<div class="" style="position:absolute;left:222px;top:149px;width:119px;height:22px;background:#EFEFEF;border:1px solid #CFCFCF;border-bottom:none;"></div>
<div class="t " style="left:230px;top:152px;height:16px;line-height:16px;font-size:12px;letter-spacing:-0.24px;">Page de démarrage</div>
<div class="" style="position:absolute;left:340px;top:149px;width:57px;height:22px;background:#EFEFEF;border:1px solid #CFCFCF;border-bottom:none;"></div>
<svg class="i" style="left:348px;top:152px" width="16" height="16"><use href="#s_scene"/></svg>
<div class="t " style="left:367px;top:152px;height:16px;line-height:16px;font-size:12px;letter-spacing:0.199px;">titre</div>
<div class="" style="position:absolute;left:396px;top:149px;width:108px;height:22px;background:#FDFDFD;border:1px solid #CFCFCF;border-bottom:none;"></div>
<svg class="i" style="left:404px;top:152px" width="16" height="16"><use href="#s_scene"/></svg>
<div class="t " style="left:423px;top:152px;height:16px;line-height:16px;font-size:12px;letter-spacing:-0.487px;">niveau_01</div>
<svg class="i" style="left:487px;top:155px" width="10" height="10"><path d="M1 1l8 8M9 1L1 9" stroke="#555" stroke-width="1.200"/></svg>
<div class="" style="position:absolute;left:503px;top:149px;width:54px;height:22px;background:#EFEFEF;border:1px solid #CFCFCF;border-bottom:none;"></div>
<svg class="i" style="left:511px;top:152px" width="16" height="16"><use href="#s_scene"/></svg>
<div class="t " style="left:529px;top:152px;height:16px;line-height:16px;font-size:12px;letter-spacing:-0.002px;">win</div>
<div class="" style="position:absolute;left:217px;top:198px;width:1068px;height:1px;background:#DCDCDC;"></div>
<div class="" style="position:absolute;left:224px;top:177px;width:66px;height:22px;background:#EFEFEF;border:1px solid #CFCFCF;border-bottom:none;"></div>
<svg class="i" style="left:231px;top:181px" width="16" height="16"><use href="#s_scene"/></svg>
<div class="t " style="left:250px;top:180.5px;height:16px;line-height:16px;font-size:12px;letter-spacing:-0.605px;">Scène</div>
<div class="" style="position:absolute;left:289px;top:177px;width:100px;height:23px;background:#FDFDFD;border:1px solid #CFCFCF;border-bottom:none;"></div>
<svg class="i" style="left:297px;top:181px" width="16" height="16"><use href="#s_events"/></svg>
<div class="t " style="left:316px;top:180.5px;height:16px;line-height:16px;font-size:12px;letter-spacing:-0.27px;">Evenements</div>
<div class="cb" style="position:absolute;left:240px;top:204px;width:331px;height:22px;"></div>
<div class="m" style="left:220px;top:206px">1</div>
<svg class="i" style="left:244px;top:207px" width="16" height="16"><use href="#c_play"/></svg>
<div class="m" style="left:261.5px;top:208px">Au lancement de la scène</div>
<div class="ab" style="position:absolute;left:572px;top:206px;width:684px;height:18px;"></div>
<svg class="i" style="left:574px;top:207px" width="16" height="16"><use href="#a_music"/></svg>
<div class="m" style="left:591.5px;top:208px">Jouer la musique brume - 16⍰02⍰2016 17.20.ogg</div>
<div class="cb" style="position:absolute;left:240px;top:230px;width:331px;height:40px;"></div>
<div class="m" style="left:220px;top:232px">2</div>
<svg class="i" style="left:244px;top:233px" width="16" height="16"><use href="#c_jump"/></svg>
<div class="m" style="left:261.5px;top:234px"><b>perso</b> saute</div>
<svg class="i" style="left:244px;top:251px" width="16" height="16"><use href="#c_one"/></svg>
<div class="m" style="left:261.5px;top:252px">Déclencher une fois</div>
<div class="ab" style="position:absolute;left:572px;top:232px;width:684px;height:18px;"></div>
<svg class="i" style="left:574px;top:233px" width="16" height="16"><use href="#a_anim"/></svg>
<div class="m" style="left:591.5px;top:234px">Faire =<i>2</i> au numéro de l'animation de <b>perso</b></div>
<div class="cb" style="position:absolute;left:240px;top:274px;width:331px;height:22px;"></div>
<div class="m" style="left:220px;top:276px">3</div>
<svg class="i" style="left:244px;top:277px" width="16" height="16"><use href="#c_jump"/></svg>
<div class="m" style="left:261.5px;top:278px"><b>perso</b> est entrain de tomber</div>
<div class="ab" style="position:absolute;left:572px;top:276px;width:684px;height:18px;"></div>
<svg class="i" style="left:574px;top:277px" width="16" height="16"><use href="#a_anim"/></svg>
<div class="m" style="left:591.5px;top:278px">Faire =<i>2</i> au numéro de l'animation de <b>perso</b></div>
<div class="cb" style="position:absolute;left:240px;top:300px;width:331px;height:22px;"></div>
<div class="m" style="left:220px;top:302px">4</div>
<svg class="i" style="left:244px;top:303px" width="16" height="16"><use href="#c_jump"/></svg>
<div class="m" style="left:261.5px;top:304px"><b>perso</b> est au sol</div>
<div class="ab" style="position:absolute;left:572px;top:302px;width:684px;height:18px;"></div>
<div class="t " style="left:575px;top:305px;height:16px;line-height:16px;font-size:13px;font-style:italic;letter-spacing:0.083px;">Pas d'actions</div>
<div class="cb" style="position:absolute;left:240px;top:328px;width:331px;height:22px;"></div>
<div class="m" style="left:220px;top:330px">5</div>
<svg class="i" style="left:244px;top:331px" width="16" height="16"><use href="#c_pos"/></svg>
<div class="m" style="left:261.5px;top:332px">La position Y de l'objet <b>perso</b> est &gt; à <i>574</i></div>
<div class="ab" style="position:absolute;left:572px;top:330px;width:684px;height:18px;"></div>
<svg class="i" style="left:574px;top:331px" width="16" height="16"><use href="#a_anim"/></svg>
<div class="m" style="left:591.5px;top:332px">Set animation of <b>perso</b> to "noyade"</div>
<div class="cb" style="position:absolute;left:240px;top:354px;width:331px;height:22px;"></div>
<div class="m" style="left:220px;top:356px">6</div>
<svg class="i" style="left:244px;top:357px" width="16" height="16"><use href="#c_coll"/></svg>
<div class="m" style="left:261.5px;top:358px"><b>perso</b> est en collision avec <b>mer</b></div>
<div class="ab" style="position:absolute;left:572px;top:356px;width:684px;height:18px;"></div>
<svg class="i" style="left:574px;top:357px" width="16" height="16"><use href="#a_clock"/></svg>
<div class="m" style="left:591.5px;top:358px">Mettre à <i>0.5</i> l'échelle du temps</div>
<div class="cb" style="position:absolute;left:240px;top:380px;width:331px;height:22px;"></div>
<div class="m" style="left:220px;top:382px">7</div>
<svg class="i" style="left:244px;top:383px" width="16" height="16"><use href="#c_key"/></svg>
<div class="m" style="left:261.5px;top:384px">La touche Left est appuyée</div>
<div class="ab" style="position:absolute;left:572px;top:382px;width:684px;height:18px;"></div>
<svg class="i" style="left:574px;top:383px" width="16" height="16"><use href="#a_flip"/></svg>
<div class="m" style="left:591.5px;top:384px">Inverser l'affichage de <b>perso</b> horizontalement : oui</div>
<div class="cb" style="position:absolute;left:240px;top:406px;width:331px;height:22px;"></div>
<div class="m" style="left:220px;top:408px">8</div>
<svg class="i" style="left:244px;top:409px" width="16" height="16"><use href="#c_key"/></svg>
<div class="m" style="left:261.5px;top:410px">La touche Right est appuyée</div>
<div class="ab" style="position:absolute;left:572px;top:408px;width:684px;height:18px;"></div>
<svg class="i" style="left:574px;top:409px" width="16" height="16"><use href="#a_flip"/></svg>
<div class="m" style="left:591.5px;top:410px">Inverser l'affichage de <b>perso</b> horizontalement : non</div>
<div class="cb" style="position:absolute;left:240px;top:432px;width:331px;height:22px;"></div>
<div class="m" style="left:220px;top:434px">9</div>
<div class="t " style="left:245px;top:437px;height:16px;line-height:16px;font-size:13px;font-style:italic;letter-spacing:0.081px;">Pas de conditions</div>
<div class="ab" style="position:absolute;left:572px;top:434px;width:684px;height:18px;"></div>
<svg class="i" style="left:574px;top:435px" width="16" height="16"><use href="#a_cam"/></svg>
<div class="m" style="left:591.5px;top:436px">Centrer la caméra sur <b>perso</b> (calque : , caméra : )</div>
<div class="cb" style="position:absolute;left:240px;top:458px;width:331px;height:40px;"></div>
<div class="m" style="left:220px;top:460px">10</div>
<svg class="i" style="left:244px;top:461px" width="16" height="16"><use href="#c_jump"/></svg>
<div class="m" style="left:261.5px;top:462px"><b>perso</b> saute</div>
<svg class="i" style="left:244px;top:479px" width="16" height="16"><use href="#c_one"/></svg>
<div class="m" style="left:261.5px;top:480px">Déclencher une fois</div>
<div class="ab" style="position:absolute;left:572px;top:460px;width:684px;height:18px;"></div>
<svg class="i" style="left:574px;top:461px" width="16" height="16"><use href="#a_sound"/></svg>
<div class="m" style="left:591.5px;top:462px">Jouer le son ../../Desktop/TutorielZdS - Ressources/713.wav</div>
<div class="cb" style="position:absolute;left:240px;top:502px;width:331px;height:22px;"></div>
<div class="m" style="left:220px;top:504px">11</div>
<svg class="i" style="left:244px;top:505px" width="16" height="16"><use href="#c_pos"/></svg>
<div class="m" style="left:261.5px;top:506px">La position Y de l'objet <b>perso</b> est &gt; à <i>1000</i></div>
<div class="ab" style="position:absolute;left:572px;top:504px;width:684px;height:18px;"></div>
<svg class="i" style="left:574px;top:505px" width="16" height="16"><use href="#c_pos"/></svg>
<div class="m" style="left:591.5px;top:506px">Faire =<i>203</i>;=<i>306</i> à la position de l'objet <b>perso</b></div>
<div class="cb" style="position:absolute;left:240px;top:528px;width:331px;height:22px;"></div>
<div class="m" style="left:220px;top:530px">12</div>
<svg class="i" style="left:244px;top:531px" width="16" height="16"><use href="#c_coll"/></svg>
<div class="m" style="left:261.5px;top:532px"><b>perso</b> est en collision avec <b>fin</b></div>
<div class="ab" style="position:absolute;left:572px;top:530px;width:684px;height:18px;"></div>
<svg class="i" style="left:574px;top:531px" width="16" height="16"><use href="#a_arrow"/></svg>
<div class="m" style="left:591.5px;top:532px">Changer pour la scène "win"</div>
<div class="cb" style="position:absolute;left:240px;top:554px;width:331px;height:22px;"></div>
<div class="m" style="left:220px;top:556px">13</div>
<div class="t " style="left:245px;top:559px;height:16px;line-height:16px;font-size:13px;font-style:italic;letter-spacing:0.081px;">Pas de conditions</div>
<div class="ab" style="position:absolute;left:572px;top:556px;width:684px;height:18px;"></div>
<div class="t " style="left:575px;top:559px;height:16px;line-height:16px;font-size:13px;font-style:italic;letter-spacing:0.083px;">Pas d'actions</div>
<div class="" style="position:absolute;left:228px;top:321.6px;width:1038px;height:1.5px;background:#141414;"></div>
<svg class="i" style="left:224px;top:316.500px" width="11" height="7"><path d="M0 6.500L4.600 .8 9.600 6.500z" fill="#111"/></svg>
<div class="t " style="left:741.5px;top:588px;height:16px;line-height:16px;font-size:13px;width:1200px;margin-left:-600px;text-align:center;letter-spacing:-0.002px;">Passez la souris sur un évènement/action/condition pour obtenir plus d'options d'édition,</div>
<div class="t " style="left:741.5px;top:604px;height:16px;line-height:16px;font-size:13px;width:1200px;margin-left:-600px;text-align:center;letter-spacing:-0.036px;">ou double cliquez pour éditer un élement.</div>
<div class="" style="position:absolute;left:1267px;top:203px;width:14px;height:631px;background:#F0F0F0;"></div>
<div class="" style="position:absolute;left:1268px;top:219px;width:13px;height:595px;background:#CDCDCD;"></div>
<svg class="i" style="left:1269px;top:207px" width="10" height="7"><path d="M1 6l4-4 4 4" fill="none" stroke="#505050" stroke-width="1.600"/></svg>
<svg class="i" style="left:1269px;top:822px" width="10" height="7"><path d="M1 1l4 4 4-4" fill="none" stroke="#505050" stroke-width="1.600"/></svg>
<div class="" style="position:absolute;left:1285px;top:174px;width:315px;height:663px;background:#F0F0F0;"></div>
<div class="" style="position:absolute;left:1289px;top:174px;width:308px;height:17px;background:#9002D1;"></div>
<div class="t " style="left:1292px;top:174px;height:16px;line-height:16px;font-size:13px;color:#fff;letter-spacing:-0.038px;">Editeur de calques</div>
<svg class="i" style="left:1568px;top:177px" width="26" height="10"><path d="M1 1h8v8H1zM1 2.500h8" fill="none" stroke="#fff" stroke-width="1.200"/><path d="M17 1l7.500 7.500M24.500 1L17 8.500" stroke="#fff" stroke-width="1.400"/></svg>
<div class="" style="position:absolute;left:1289px;top:191px;width:308px;height:26px;background:#E2E2E2;"></div>
<div class="" style="position:absolute;left:1289px;top:191px;width:203px;height:26px;background:#F1F1F1;"></div>
<svg class="i" style="left:1297px;top:196px" width="16" height="16"><use href="#l_plus"/></svg>
<svg class="i" style="left:1321px;top:196px" width="16" height="16"><use href="#l_minus"/></svg>
<svg class="i" style="left:1354px;top:196px" width="16" height="16"><use href="#l_edit"/></svg>
<svg class="i" style="left:1378px;top:196px" width="16" height="16"><use href="#l_up"/></svg>
<svg class="i" style="left:1402px;top:196px" width="16" height="16"><use href="#l_down"/></svg>
<svg class="i" style="left:1434px;top:196px" width="16" height="16"><use href="#l_refresh"/></svg>
<svg class="i" style="left:1468px;top:196px" width="16" height="16"><use href="#l_help"/></svg>
<div class="" style="position:absolute;left:1345px;top:195px;width:1px;height:17px;background:#C8C8C8;"></div>
<div class="" style="position:absolute;left:1426px;top:195px;width:1px;height:17px;background:#C8C8C8;"></div>
<div class="" style="position:absolute;left:1459px;top:195px;width:1px;height:17px;background:#C8C8C8;"></div>
<div class="" style="position:absolute;left:1289px;top:217px;width:308px;height:106px;background:#fff;border:1px solid #ABABAB;"></div>
<div class="t " style="left:1297px;top:223px;height:16px;line-height:16px;font-size:12px;letter-spacing:-0.171px;">Calque</div>
<div class="t " style="left:1407px;top:223px;height:16px;line-height:16px;font-size:12px;letter-spacing:-0.491px;">Vi...</div>
<div class="" style="position:absolute;left:1400px;top:219px;width:1px;height:23px;background:#EEEEEE;"></div>
<div class="" style="position:absolute;left:1432px;top:219px;width:1px;height:23px;background:#EEEEEE;"></div>
<div class="" style="position:absolute;left:1290px;top:242px;width:306px;height:1px;background:#F0F0F0;"></div>
<svg class="i" style="left:1298px;top:245px" width="11" height="15"><use href="#l_cur"/></svg>
<div class="t " style="left:1313px;top:245px;height:16px;line-height:16px;font-size:12px;letter-spacing:-0.29px;">Calque de base</div>
<svg class="i" style="left:1401px;top:246px" width="17" height="12"><use href="#l_eye"/></svg>
<div class="t " style="left:1313px;top:264.5px;height:16px;line-height:16px;font-size:12px;letter-spacing:-0.052px;">Nouveau calque</div>
<svg class="i" style="left:1401px;top:265px" width="17" height="12"><use href="#l_eye"/></svg>
<div class="" style="position:absolute;left:1289px;top:329px;width:308px;height:17px;background:#9002D1;"></div>
<div class="t " style="left:1292px;top:329px;height:16px;line-height:16px;font-size:13px;color:#fff;letter-spacing:-0.075px;">Editeur d'objets</div>
<svg class="i" style="left:1568px;top:332px" width="26" height="10"><path d="M1 1h8v8H1zM1 2.500h8" fill="none" stroke="#fff" stroke-width="1.200"/><path d="M17 1l7.500 7.500M24.500 1L17 8.500" stroke="#fff" stroke-width="1.400"/></svg>
<div class="" style="position:absolute;left:1289px;top:346px;width:308px;height:460px;background:#fff;overflow:hidden;"></div>
<div class="dv" style="position:absolute;left:1304px;top:368px;width:0px;height:438px;"></div>
<div class="dv" style="position:absolute;left:1331px;top:370px;width:0px;height:436px;"></div>
<div class="dh" style="position:absolute;left:1310px;top:358px;width:8px;height:0px;"></div>
<svg class="i" style="left:1302px;top:354.5px;background:#fff" width="7" height="8"><path d="M6 1v5.500H.5z" fill="#404040"/></svg>
<svg class="i" style="left:1321px;top:352px" width="20.5" height="17.6"><use href="#o_root"/></svg>
<div class="t " style="left:1348px;top:350px;height:16px;line-height:16px;font-size:12px;letter-spacing:-0.114px;">Objets</div>
<div class="dh" style="position:absolute;left:1332px;top:382px;width:14px;height:0px;"></div>
<svg class="i" style="left:1347px;top:371px" width="21" height="21"><use href="#o_perso"/></svg>
<div class="t " style="left:1375px;top:374px;height:16px;line-height:16px;font-size:12px;letter-spacing:-0.204px;">perso</div>
<div class="dh" style="position:absolute;left:1332px;top:406px;width:14px;height:0px;"></div>
<svg class="i" style="left:1347px;top:395px" width="21" height="21"><use href="#o_plat"/></svg>
<div class="t " style="left:1375px;top:398px;height:16px;line-height:16px;font-size:12px;letter-spacing:0.13px;">plateforme</div>
<div class="dh" style="position:absolute;left:1332px;top:430px;width:14px;height:0px;"></div>
<svg class="i" style="left:1347px;top:419.2px" width="22" height="22"><use href="#o_coin"/></svg>
<div class="t " style="left:1375px;top:422px;height:16px;line-height:16px;font-size:12px;letter-spacing:-0.003px;">coin</div>
<div class="dh" style="position:absolute;left:1332px;top:454px;width:14px;height:0px;"></div>
<svg class="i" style="left:1347px;top:443px" width="21" height="21"><use href="#o_text"/></svg>
<div class="t " style="left:1375px;top:446px;height:16px;line-height:16px;font-size:12px;letter-spacing:-0.269px;">score</div>
<div class="dh" style="position:absolute;left:1332px;top:478px;width:14px;height:0px;"></div>
<svg class="i" style="left:1347px;top:467px" width="21" height="21"><use href="#o_sprite"/></svg>
<div class="t " style="left:1375px;top:470px;height:16px;line-height:16px;font-size:12px;letter-spacing:0.161px;">bato</div>
<div class="dh" style="position:absolute;left:1332px;top:502px;width:14px;height:0px;"></div>
<svg class="i" style="left:1347px;top:491px" width="21" height="21"><use href="#o_sprite"/></svg>
<div class="t " style="left:1375px;top:494px;height:16px;line-height:16px;font-size:12px;letter-spacing:-0.138px;">phare</div>
<div class="dh" style="position:absolute;left:1332px;top:526px;width:14px;height:0px;"></div>
<svg class="i" style="left:1347px;top:515px" width="21" height="21"><use href="#o_sprite"/></svg>
<div class="t " style="left:1375px;top:518px;height:16px;line-height:16px;font-size:12px;letter-spacing:-0.502px;">caisse</div>
<div class="dh" style="position:absolute;left:1332px;top:550px;width:14px;height:0px;"></div>
<svg class="i" style="left:1347px;top:539px" width="21" height="21"><use href="#o_sprite"/></svg>
<div class="t " style="left:1375px;top:542px;height:16px;line-height:16px;font-size:12px;letter-spacing:-0.006px;">bato2</div>
<div class="dh" style="position:absolute;left:1332px;top:574px;width:14px;height:0px;"></div>
<svg class="i" style="left:1347px;top:563px" width="21" height="21"><use href="#o_sprite"/></svg>
<div class="t " style="left:1375px;top:566px;height:16px;line-height:16px;font-size:12px;letter-spacing:0.064px;">tronclarge</div>
<div class="dh" style="position:absolute;left:1332px;top:598px;width:14px;height:0px;"></div>
<svg class="i" style="left:1347px;top:587px" width="21" height="21"><use href="#o_sprite"/></svg>
<div class="t " style="left:1375px;top:590px;height:16px;line-height:16px;font-size:12px;letter-spacing:0.049px;">poteau</div>
<div class="dh" style="position:absolute;left:1332px;top:622px;width:14px;height:0px;"></div>
<svg class="i" style="left:1347px;top:611px" width="21" height="21"><use href="#o_sprite"/></svg>
<div class="t " style="left:1375px;top:614px;height:16px;line-height:16px;font-size:12px;letter-spacing:0.274px;">rondin</div>
<div class="dh" style="position:absolute;left:1332px;top:646px;width:14px;height:0px;"></div>
<svg class="i" style="left:1347px;top:635px" width="21" height="21"><use href="#o_sprite"/></svg>
<div class="t " style="left:1375px;top:638px;height:16px;line-height:16px;font-size:12px;letter-spacing:-0.139px;">house</div>
<div class="dh" style="position:absolute;left:1332px;top:670px;width:14px;height:0px;"></div>
<svg class="i" style="left:1347px;top:659px" width="21" height="21"><use href="#o_sprite"/></svg>
<div class="t " style="left:1375px;top:662px;height:16px;line-height:16px;font-size:12px;letter-spacing:-1.269px;">HERBE</div>
<div class="dh" style="position:absolute;left:1332px;top:694px;width:14px;height:0px;"></div>
<svg class="i" style="left:1347px;top:683px" width="21" height="21"><use href="#o_sprite"/></svg>
<div class="t " style="left:1375px;top:686px;height:16px;line-height:16px;font-size:12px;letter-spacing:-0.003px;">petroliere</div>
<div class="dh" style="position:absolute;left:1332px;top:718px;width:14px;height:0px;"></div>
<svg class="i" style="left:1347px;top:707px" width="21" height="21"><use href="#o_sprite"/></svg>
<div class="t " style="left:1375px;top:710px;height:16px;line-height:16px;font-size:12px;letter-spacing:-0.003px;">submarine</div>
<div class="dh" style="position:absolute;left:1332px;top:742px;width:14px;height:0px;"></div>
<svg class="i" style="left:1347px;top:731px" width="21" height="21"><use href="#o_sprite"/></svg>
<div class="t " style="left:1375px;top:734px;height:16px;line-height:16px;font-size:12px;letter-spacing:-0.037px;">lampadaire</div>
<div class="dh" style="position:absolute;left:1332px;top:766px;width:14px;height:0px;"></div>
<svg class="i" style="left:1347px;top:755px" width="21" height="21"><use href="#o_sprite"/></svg>
<div class="t " style="left:1375px;top:758px;height:16px;line-height:16px;font-size:12px;letter-spacing:0.247px;">batiment</div>
<div class="dh" style="position:absolute;left:1332px;top:790px;width:14px;height:0px;"></div>
<svg class="i" style="left:1347px;top:779px" width="21" height="21"><use href="#o_sprite"/></svg>
<div class="t " style="left:1375px;top:782px;height:16px;line-height:16px;font-size:12px;letter-spacing:0.042px;">paveton</div>
<svg class="i" style="left:1347px;top:803px" width="21" height="3"><rect x="1.800" y="1.500" width="17.400" height="6" fill="#E6E6E6" stroke="#3A4EAE" stroke-width="2"/><rect x=".5" y=".3" width="3" height="2" fill="#49A8E4"/><rect x="17.500" y=".3" width="3" height="2" fill="#49A8E4"/><rect x="9" y=".3" width="3" height="1.800" fill="#49A8E4"/></svg>
<div class="" style="position:absolute;left:1581px;top:346px;width:16px;height:460px;background:#F0F0F0;"></div>
<div class="" style="position:absolute;left:1582px;top:364px;width:15px;height:298px;background:#CDCDCD;"></div>
<svg class="i" style="left:1584px;top:351px" width="10" height="7"><path d="M1 6l4-4 4 4" fill="none" stroke="#505050" stroke-width="1.600"/></svg>
<svg class="i" style="left:1584px;top:795px" width="10" height="7"><path d="M1 1l4 4 4-4" fill="none" stroke="#505050" stroke-width="1.600"/></svg>
<div class="" style="position:absolute;left:1289px;top:807px;width:308px;height:27px;background:#fff;border:1px solid #ABABAB;"></div>
<svg class="i" style="left:1296px;top:811px" width="16" height="16"><use href="#x_search"/></svg>
<div class="t " style="left:1320px;top:809px;height:16px;line-height:16px;font-size:12px;color:#6a6a6a;letter-spacing:-0.169px;">Chercher</div>
<div class="" style="position:absolute;left:0px;top:837px;width:1600px;height:23px;background:#F0F0F0;border-top:1px solid #E2E2E2;"></div>
<div class="t " style="left:3px;top:842px;height:16px;line-height:16px;font-size:12px;letter-spacing:-0.3px;">Position -11.000013;-7.500000. </div>
<div class="t " style="left:163.6px;top:842px;height:16px;line-height:16px;font-size:12px;letter-spacing:-0.086px;">SHIFT pour sélection multiple, </div>
<div class="t " style="left:325px;top:842px;height:16px;line-height:16px;font-size:12px;letter-spacing:0.112px;">clic droit pour plus d'options.</div>
<div class="" style="position:absolute;left:1396px;top:840px;width:1px;height:18px;background:#DADADA;"></div>
<div class="t " style="left:1401px;top:842px;height:16px;line-height:16px;font-size:12px;letter-spacing:-0.487px;">2008-2016</div>
<div class="" style="position:absolute;left:0px;top:860px;width:1600px;height:40px;background:linear-gradient(90deg,#5A3130 0,#5E3433 238px,#80453D 252px,#8A4A40 320px,#8F4C3E 789px,#5A342F 790px,#5A342F 806px,#99543F 808px,#9A5540 1335px,#5E3A35 1336px,#5E3A35 1352px,#8E625A 1354px,#8E625A 1466px,#5C2F2C 1467px);"></div>
<div class="" style="position:absolute;left:0px;top:860px;width:1600px;height:1px;background:rgba(60,30,28,.5);"></div>
<svg class="i" style="left:11.500px;top:866px" width="27" height="27" viewBox="0 0 27 27"><path d="M0 3.600L11.300 2v10.600H0zM12.600 1.800L27 0v12.600H12.600zM0 13.900h11.300v10.600L0 22.900zM12.600 13.900H27V26.500l-14.400-1.900z" fill="#fff"/></svg>
<div class="" style="position:absolute;left:52px;top:862px;width:53px;height:37px;background:rgba(255,255,255,.16);border:1px solid rgba(255,255,255,.22);"></div>
<div class="" style="position:absolute;left:105px;top:862px;width:3px;height:37px;background:rgba(255,255,255,.1);border-right:1px solid rgba(255,255,255,.2);"></div>
<div class="" style="position:absolute;left:114px;top:862px;width:53px;height:37px;background:rgba(255,255,255,.16);border:1px solid rgba(255,255,255,.22);"></div>
<div class="" style="position:absolute;left:167px;top:862px;width:3px;height:37px;background:rgba(255,255,255,.1);border-right:1px solid rgba(255,255,255,.2);"></div>
<div class="" style="position:absolute;left:176px;top:862px;width:58px;height:37px;background:rgba(255,255,255,.42);border:1px solid rgba(255,255,255,.55);"></div>
<svg class="i" style="left:62px;top:866px" width="33" height="30" viewBox="0 0 33 30"><path d="M1.500 3.500h9l1.500 2h8v20H1.500z" fill="#E9CE78"/><path d="M9.500 5.500h9l1.500 2h7v18H9.500z" fill="#F0D988"/><path d="M17.500 7.500h9l1 1.500h4v18h-14z" fill="#F6E49A"/><path d="M.8 7h16l2 2.500h12.700V28H.8z" fill="#FAEBAE"/><path d="M.8 7h16l2 2.500h12.700v2H.8z" fill="#F3DD8C"/><rect x="3" y="2.800" width="3.400" height="1.800" fill="#2FA84F"/><rect x="10.500" y="4.800" width="3.400" height="1.800" fill="#D8453A"/><rect x="18.500" y="6.800" width="3.400" height="1.800" fill="#3F7FD8"/><path d="M4.500 17.500h24V30h-5.500v-7.500h-13V30H4.500z" fill="#8FCDF3"/><path d="M4.500 17.500h24v3h-24z" fill="#B9E2FA"/><path d="M6.500 22.500h2V30h-2zM24.500 22.500h2V30h-2z" fill="#5FB0E6" opacity=".7"/></svg>
<svg class="i" style="left:125.300px;top:865.200px" width="30" height="30" viewBox="0 0 30 30"><path d="M2.300 7.010A15 15 0 0 1 28.270 8H15A7 7 0 0 0 8.940 18.500z" fill="#E04A3A"/><path d="M28.270 8A15 15 0 0 1 14.430 29.990L21.060 18.500A7 7 0 0 0 15 8z" fill="#FBC62F"/><path d="M14.430 29.990A15 15 0 0 1 2.300 7.010L8.940 18.500A7 7 0 0 0 21.060 18.500z" fill="#22A455"/><circle cx="15" cy="15" r="6.900" fill="#F4F4F4"/><circle cx="15" cy="15" r="5.500" fill="#4286F0"/></svg>
<svg class="i" style="left:188.5px;top:866.5px" width="32.5" height="26.5"><use href="#x_gd"/></svg>
<svg class="i" style="left:1420px;top:877.500px" width="9" height="5"><path d="M0 5L4.300 0l4.300 5z" fill="#fff"/></svg>
<svg class="i" style="left:1447px;top:872px" width="10" height="18"><rect x="3" y="0" width="4" height="2" fill="#fff"/><rect x=".8" y="2" width="8.400" height="15" rx="1" fill="none" stroke="#fff" stroke-width="1.500"/><rect x="2.800" y="9" width="4.400" height="6" fill="#fff"/><rect x="2.800" y="4.500" width="4.400" height="4" fill="#fff" opacity=".35"/></svg>
<svg class="i" style="left:1465px;top:875px" width="16" height="12"><g fill="#fff"><rect x="0" y="10" width="2" height="2"/><rect x="3" y="8" width="2" height="4"/><rect x="6" y="6" width="2" height="6"/><rect x="9" y="3" width="2" height="9"/><rect x="12" y="0" width="2.500" height="12"/></g></svg>
<svg class="i" style="left:1489px;top:873px" width="16" height="16"><path d="M1 5.500h3L8.500 1v14L4 10.500H1z" fill="#fff"/><path d="M10.500 5a4 4 0 0 1 0 6M12.500 3a7 7 0 0 1 0 10" fill="none" stroke="#fff" stroke-width="1.200"/></svg>
<div class="t " style="left:1552.5px;top:864.5px;height:16px;line-height:16px;font-size:12px;width:1200px;margin-left:-600px;text-align:center;color:#fff;letter-spacing:-0.306px;">18:03</div>
<div class="t " style="left:1552.5px;top:880.5px;height:16px;line-height:16px;font-size:12px;width:1200px;margin-left:-600px;text-align:center;color:#fff;letter-spacing:-0.156px;">16/05/2018</div>
</div>
</body>
</html>
